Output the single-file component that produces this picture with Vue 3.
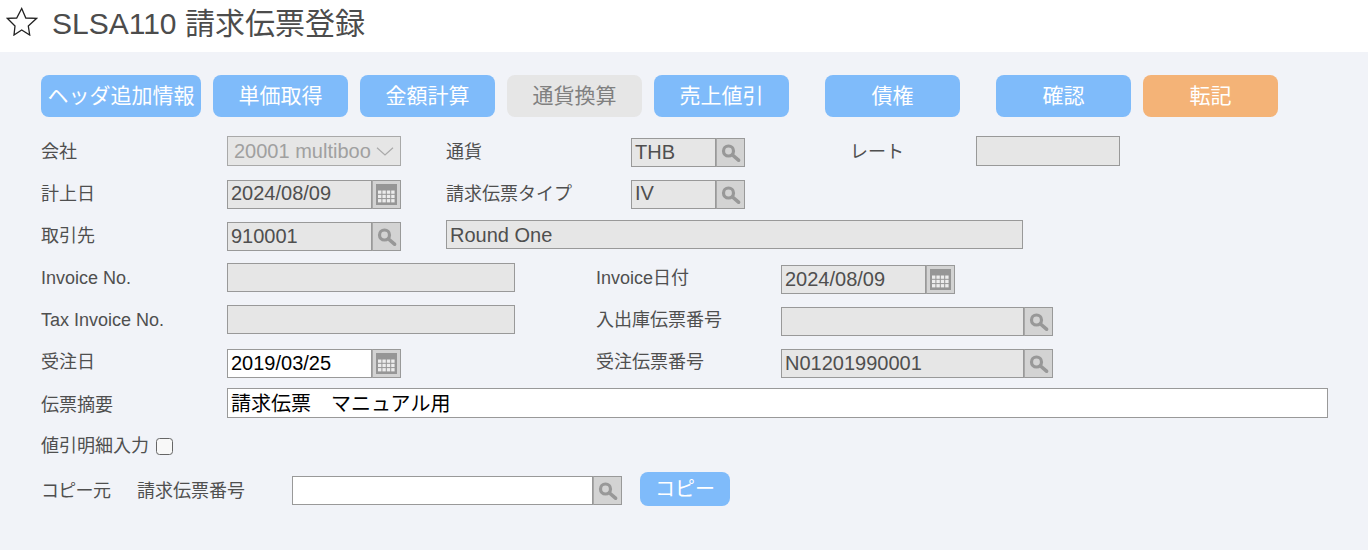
<script setup>
const toolbar = [
  { label: 'ヘッダ追加情報', cls: 'w160 mr12' },
  { label: '単価取得', cls: 'w135 mr12' },
  { label: '金額計算', cls: 'w135 mr12' },
  { label: '通貨換算', cls: 'w135 mr12 off' },
  { label: '売上値引', cls: 'w135 mr36' },
  { label: '債権', cls: 'w135 mr36' },
  { label: '確認', cls: 'w135 mr12' },
  { label: '転記', cls: 'w135 orange' },
]
const cols = [2, 6.4, 10.8, 15.2]
const rows = [6.5, 10.8, 15.1]
</script>

<template>
  <div class="page">
    <svg class="defs" width="0" height="0">
      <defs>
        <g id="ico-search">
          <circle cx="7.500" cy="8" r="5" fill="none" stroke="#989898" stroke-width="3.200"/>
          <path d="M11.500 12l6 5.200" stroke="#989898" stroke-width="3.600" stroke-linecap="round"/>
        </g>
        <g id="ico-cal">
          <rect width="21" height="21" fill="#969696"/>
          <g fill="#ececec">
            <template v-for="y in rows" :key="y">
              <rect v-for="x in cols" :key="x" :x="x" :y="y" width="3.400" height="3.300"/>
            </template>
          </g>
        </g>
      </defs>
    </svg>

    <header class="head">
      <svg class="star" width="32" height="30" viewBox="0 0 32 30"><path d="M15.700 2.500L19.800 12 30.700 12.300 22.300 20 23.700 29 15.700 24 8 29 9 20 1.300 12.300 10.700 12Z" fill="none" stroke="#222" stroke-width="1.300"/></svg>
      <h1 class="title">SLSA110 請求伝票登録</h1>
    </header>
    <main class="main">
      <div class="toolbar">
        <button v-for="b in toolbar" :key="b.label" class="btn" :class="b.cls">{{ b.label }}</button>
      </div>

      <div class="row r1">
        <label class="lab l1">会社</label>
        <div class="select"><span>20001 multiboo</span><svg width="18" height="9" viewBox="0 0 18 9"><path d="M1 .7l8 7.300 8-7.300" fill="none" stroke="#aaa" stroke-width="1.200"/></svg></div>
        <label class="lab l2">通貨</label>
        <div class="combo w114"><div class="inp">THB</div><div class="ib"><svg width="20" height="20"><use href="#ico-search"/></svg></div></div>
        <label class="lab l3">レート</label>
        <div class="inp solo w144 tall"></div>
      </div>

      <div class="row r2">
        <label class="lab l1">計上日</label>
        <div class="combo w174"><div class="inp">2024/08/09</div><div class="ib"><svg width="21" height="21"><use href="#ico-cal"/></svg></div></div>
        <label class="lab l2">請求伝票タイプ</label>
        <div class="combo w114"><div class="inp">IV</div><div class="ib"><svg width="20" height="20"><use href="#ico-search"/></svg></div></div>
      </div>

      <div class="row r3">
        <label class="lab l1">取引先</label>
        <div class="combo w174"><div class="inp">910001</div><div class="ib"><svg width="20" height="20"><use href="#ico-search"/></svg></div></div>
        <div class="inp solo name">Round One</div>
      </div>

      <div class="row r4">
        <label class="lab l1">Invoice No.</label>
        <div class="inp solo w288"></div>
        <label class="lab l4">Invoice日付</label>
        <div class="combo w174 shift"><div class="inp">2024/08/09</div><div class="ib"><svg width="21" height="21"><use href="#ico-cal"/></svg></div></div>
      </div>

      <div class="row r5">
        <label class="lab l1">Tax Invoice No.</label>
        <div class="inp solo w288"></div>
        <label class="lab l4">入出庫伝票番号</label>
        <div class="combo w272 shift"><div class="inp"></div><div class="ib"><svg width="20" height="20"><use href="#ico-search"/></svg></div></div>
      </div>

      <div class="row r6">
        <label class="lab l1">受注日</label>
        <div class="combo w174"><div class="inp white">2019/03/25</div><div class="ib"><svg width="21" height="21"><use href="#ico-cal"/></svg></div></div>
        <div class="spacer"></div>
        <label class="lab l4">受注伝票番号</label>
        <div class="combo w272"><div class="inp">N01201990001</div><div class="ib"><svg width="20" height="20"><use href="#ico-search"/></svg></div></div>
      </div>

      <div class="row r7">
        <label class="lab l1">伝票摘要</label>
        <div class="inp solo white memo">請求伝票　マニュアル用</div>
      </div>

      <div class="row r8">
        <label class="lab">値引明細入力</label>
        <span class="check"></span>
      </div>

      <div class="row r9">
        <label class="lab l5">コピー元</label>
        <label class="lab l6">請求伝票番号</label>
        <div class="combo w330"><div class="inp white"></div><div class="ib"><svg width="20" height="20"><use href="#ico-search"/></svg></div></div>
        <button class="btn copy">コピー</button>
      </div>
    </main>
  </div>
</template>

<style>
html, body { margin: 0; background: #f1f3f8; }
</style>

<style scoped>
.page {
  width: 1368px;
  height: 550px;
  overflow: hidden;
  font-family: "Liberation Sans", "Noto Sans CJK JP", sans-serif;
  color: #4f4f4f;
  background: #f1f3f8;
}
.defs { display: block; height: 0; }
.head {
  height: 52px;
  background: #fff;
  display: flex;
  align-items: center;
  padding: 0 0 4px 6px;
  box-sizing: border-box;
}
.star { margin: 0 14px 6px 0; }
.title {
  margin: 0;
  font-size: 30px;
  font-weight: 400;
  line-height: 46px;
  color: #4c4c4c;
}
.main { padding: 23px 0 0 41px; }
.toolbar { display: flex; height: 42px; margin-bottom: 19px; }
.btn {
  height: 42px;
  padding: 0 0 4px;
  border: 0;
  border-radius: 8px;
  background: #7fbbfa;
  color: #fff;
  font: inherit;
  font-size: 21px;
}
.w160 { width: 160px; }
.w135 { width: 135px; }
.mr12 { margin-right: 12px; }
.mr36 { margin-right: 36px; }
.off { background: #e6e6e6; color: #808080; }
.orange { background: #f4b377; }
.row { display: flex; align-items: flex-start; height: 30px; }
.r2 { margin-top: 14px; }
.r3 { margin-top: 12px; }
.r4 { margin-top: 11px; }
.r5 { margin-top: 12px; }
.r6 { margin-top: 14px; }
.r7 { margin-top: 9px; }
.r8 { margin-top: 14px; }
.r9 { margin-top: 14px; }
.lab {
  font-size: 18px;
  line-height: 30px;
  color: #4f4f4f;
  white-space: nowrap;
}
.r1 .lab { line-height: 32px; }
.r2 .lab, .r3 .lab, .r8 .lab { line-height: 28px; }
.r6 .lab { line-height: 26px; }
.r7 .lab { line-height: 34px; }
.l1 { width: 186px; }
.l2 { width: 185px; margin-left: 45px; }
.l3 { width: 126px; margin-left: 105px; }
.l4 { width: 185px; margin-left: 81px; }
.l5 { width: 96px; letter-spacing: -0.7px; }
.l6 { width: 155px; }
.select {
  width: 174px;
  height: 30px;
  box-sizing: border-box;
  border: 1px solid #a9a9a9;
  background: #e6e6e6;
  color: #a0a0a0;
  font-size: 20px;
  line-height: 28px;
  padding-left: 6px;
  display: flex;
  align-items: center;
  justify-content: space-between;
  overflow: hidden;
  white-space: nowrap;
}
.select svg { flex: none; margin-right: 6px; }
.combo { display: flex; height: 29px; }
.combo .inp { flex: 1; min-width: 0; }
.inp {
  height: 29px;
  box-sizing: border-box;
  border: 1px solid #999;
  background: #e6e6e6;
  color: #4f4f4f;
  font-size: 20px;
  line-height: 27px;
  padding-left: 3px;
  white-space: nowrap;
}
.tall { height: 30px; }
.r2 .inp { line-height: 24px; }
.r3 .combo .inp, .r4 .combo .inp, .r6 .combo .inp { line-height: 26px; }
.name { line-height: 28px; }
.memo { line-height: 30px; height: 30px; }
.ib {
  flex: none;
  width: 29px;
  height: 29px;
  box-sizing: border-box;
  border: 1px solid #999;
  border-left-color: #a8a8a8;
  background: #d3d3d3;
  display: flex;
  align-items: center;
  justify-content: center;
}
.ib svg { filter: blur(0.4px); }
.white { background: #fff; color: #000; }
.w114 { width: 114px; }
.w144 { width: 144px; }
.w174 { width: 174px; }
.w272 { width: 272px; }
.w288 { width: 288px; }
.w330 { width: 330px; }
.r1 .combo, .shift { margin-top: 2px; }
.name { width: 577px; margin-left: 45px; margin-top: -2px; }
.memo { width: 1101px; }
.spacer { width: 114px; flex: none; }
.check {
  width: 17px;
  height: 17px;
  box-sizing: border-box;
  margin: 6px 0 0 7px;
  border: 1.5px solid #666;
  border-radius: 3.5px;
  background: #f8f8f8;
}
.copy {
  width: 90px;
  height: 34px;
  margin-left: 18px;
  margin-top: -4px;
  font-size: 20px;
  line-height: 28px;
  padding-bottom: 0;
}
</style>
